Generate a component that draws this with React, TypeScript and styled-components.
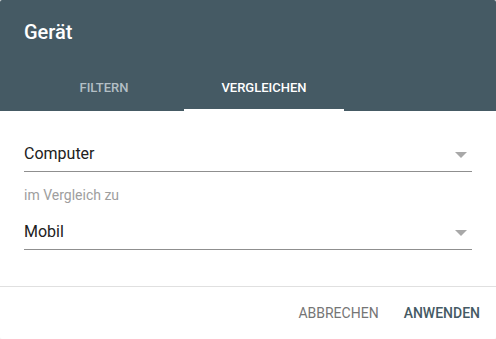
import { createGlobalStyle, styled } from "styled-components";

const GlobalStyle = createGlobalStyle`
  html, body {
    margin: 0;
    padding: 0;
    background: #f1f1f1;
  }
  body {
    font-family: Roboto, "Liberation Sans", Arial, sans-serif;
  }
`;

const Dialog = styled.div`
  width: 496px;
  height: 339px;
  background: white;
  border-radius: 2px;
  overflow: hidden;
  display: flex;
  flex-direction: column;
`;

const Header = styled.div`
  background-color: #455a64;
  padding: 20px 24px 0;
  display: flex;
  flex-direction: column;
`;

const Title = styled.h2`
  margin: 0 0 19px;
  font-size: 20px;
  line-height: 24px;
  font-weight: 500;
  color: white;
`;

const Tabs = styled.div`
  display: flex;
`;

const Tab = styled.div<{ $active?: boolean }>`
  width: 160px;
  height: 48px;
  box-sizing: border-box;
  display: flex;
  align-items: center;
  justify-content: center;
  font-size: 13px;
  font-weight: 500;
  text-transform: uppercase;
  color: ${(p) => (p.$active ? "#ffffff" : "#b3bfc5")};
  border-bottom: 2px solid ${(p) => (p.$active ? "#ffffff" : "transparent")};
  padding-top: 2px;
  cursor: pointer;
`;

const Body = styled.div`
  padding: 21px 24px 36px;
  border-bottom: 1px solid #e0e0e0;
`;

const Select = styled.div`
  display: flex;
  align-items: center;
  justify-content: space-between;
  padding: 10px 0 5px;
  border-bottom: 1px solid #8f8f8f;
  font-size: 16px;
  line-height: 24px;
  color: #212121;
  cursor: pointer;
`;

const Arrow = styled.svg`
  width: 12px;
  height: 6px;
  margin-right: 5px;
  margin-top: 2px;
`;

const Label = styled.div`
  margin: 13px 0 5px;
  font-size: 14px;
  line-height: 20px;
  color: #9e9e9e;
`;

const Footer = styled.div`
  display: flex;
  justify-content: flex-end;
  gap: 9px;
  padding: 8px 8px;
`;

const Button = styled.button<{ $primary?: boolean }>`
  border: none;
  background: none;
  height: 36px;
  padding: 0 8px;
  font-family: inherit;
  font-size: 14px;
  font-weight: ${(p) => (p.$primary ? 500 : 400)};
  text-transform: uppercase;
  color: ${(p) => (p.$primary ? "#455a64" : "#757575")};
  cursor: pointer;
`;

function DropArrow() {
  return (
    <Arrow viewBox="0 0 12 6">
      <path d="M0 0 L12 0 L6 6 Z" fill="#a8a8a8" />
    </Arrow>
  );
}

export default function App() {
  return (
    <>
      <GlobalStyle />
      <Dialog>
        <Header>
          <Title>Gerät</Title>
          <Tabs>
            <Tab>Filtern</Tab>
            <Tab $active>Vergleichen</Tab>
          </Tabs>
        </Header>
        <Body>
          <Select>
            Computer
            <DropArrow />
          </Select>
          <Label>im Vergleich zu</Label>
          <Select>
            Mobil
            <DropArrow />
          </Select>
        </Body>
        <Footer>
          <Button>Abbrechen</Button>
          <Button $primary>Anwenden</Button>
        </Footer>
      </Dialog>
    </>
  );
}
